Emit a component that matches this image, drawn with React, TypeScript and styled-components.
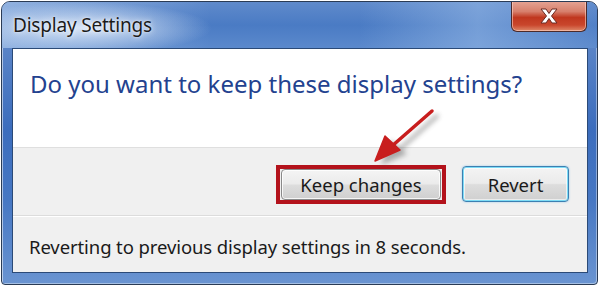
import React from "react";
import styled, { createGlobalStyle } from "styled-components";

const Global = createGlobalStyle`
  html, body { margin: 0; padding: 0; background: #ffffff; }
  body { width: 600px; height: 286px; overflow: hidden; }
  * { box-sizing: border-box; }
`;

const Window = styled.div`
  position: relative;
  margin: 1px 2px 0 1px;
  width: 597px;
  height: 284px;
  border: 1px solid #2a3b55;
  border-radius: 9px 9px 4px 4px;
  background: linear-gradient(180deg, #6a90cc 0%, #3c6dbd 45%, #4677c3 70%, #6a94d1 100%);
  display: flex;
  flex-direction: column;
  overflow: hidden;
  box-shadow: inset 1px 1px 0 rgba(255, 255, 255, 0.55), inset -1px -1px 0 rgba(255, 255, 255, 0.4);
`;

const TitleBar = styled.div`
  height: 46px;
  display: flex;
  align-items: flex-start;
  justify-content: space-between;
  padding: 0 9px 0 11px;
  background:
    radial-gradient(ellipse 130px 26px at 80px 26px, rgba(220, 232, 248, 0.95), rgba(220, 232, 248, 0) 100%),
    linear-gradient(90deg, rgba(180, 205, 238, 0.6) 0%, rgba(60, 110, 190, 0) 35%, rgba(60, 110, 190, 0) 60%, rgba(150, 185, 230, 0.55) 80%, rgba(110, 150, 210, 0.2) 100%),
    linear-gradient(180deg, #5f8acb 0%, #4a7bc4 50%, #5b89cc 100%);
`;

const Title = styled.div`
  margin-top: 10px;
  line-height: 26px;
  font-family: "Noto Sans", "Open Sans", sans-serif;
  font-size: 19px;
  letter-spacing: -0.2px;
  color: #1b1b1b;
  text-shadow: 0 0 6px rgba(255, 255, 255, 0.9), 0 0 2px rgba(255, 255, 255, 0.8);
`;

const CloseButton = styled.div`
  width: 76px;
  height: 31px;
  margin-top: -1px;
  margin-right: 1px;
  border: 1px solid #4b2a2a;
  border-top: none;
  border-radius: 0 0 6px 6px;
  background: linear-gradient(180deg, #e6a595 0%, #d7806c 35%, #c0381f 55%, #c9462c 80%, #de8a6a 100%);
  box-shadow: inset 0 0 0 1px rgba(255, 220, 210, 0.55);
  display: flex;
  align-items: center;
  justify-content: center;
`;

const Client = styled.div`
  margin: 0 9px 0 10px;
  flex: 1;
  border: 1px solid #2b4a77;
  background: #f0f0f0;
  display: flex;
  flex-direction: column;
`;

const MainArea = styled.div`
  height: 99px;
  background: #ffffff;
  border-bottom: 1px solid #dfdfdf;
  padding: 19px 0 0 17px;
`;

const Heading = styled.div`
  font-family: "Noto Sans", "Open Sans", sans-serif;
  font-size: 24px;
  line-height: 32px;
  letter-spacing: 0px;
  color: #23428f;
`;

const ButtonRow = styled.div`
  height: 68px;
  border-bottom: 1px solid #dcdcdc;
  box-shadow: 0 1px 0 #ffffff;
  display: flex;
  justify-content: flex-end;
  align-items: center;
  gap: 16px;
  padding: 5px 18px 0 0;
`;

const Highlight = styled.div`
  border: 4px solid #b3121b;
  padding: 0 1px;
`;

const Button = styled.div<{ $default?: boolean; $width: number; $height: number }>`
  width: ${(p) => p.$width}px;
  height: ${(p) => p.$height}px;
  border-radius: 4px;
  border: 1px solid ${(p) => (p.$default ? "#3c7fb1" : "#8a8a8a")};
  background: linear-gradient(180deg, #f4f4f4 0%, #ebebeb 48%, #dddddd 52%, #cfcfcf 100%);
  box-shadow: ${(p) =>
    p.$default
      ? "inset 0 0 0 1px #7ddcf6, inset 0 0 0 2px rgba(255,255,255,0.6), 0 0 2px rgba(80,170,230,0.6)"
      : "inset 0 0 0 1px rgba(255,255,255,0.8)"};
  display: flex;
  align-items: center;
  justify-content: center;
  font-family: "Noto Sans", "Open Sans", sans-serif;
  font-size: 18.5px;
  color: #1a1a1a;
`;

const Status = styled.div`
  flex: 1;
  padding: 19px 0 0 16px;
  font-family: "Noto Sans", "Open Sans", sans-serif;
  font-size: 18.5px;
  line-height: 24px;
  letter-spacing: -0.1px;
  color: #1a1a1a;
`;

const BottomFrame = styled.div`
  height: 11px;
`;

const ArrowLayer = styled.svg`
  position: absolute;
  left: 340px;
  top: 100px;
  overflow: visible;
  pointer-events: none;
`;

export default function App() {
  return (
    <>
      <Global />
      <Window>
        <TitleBar>
          <Title>Display Settings</Title>
          <CloseButton>
            <svg width="22" height="18" viewBox="0 0 22 18">
              <path
                d="M3 2 L8 2 L11 6.5 L14 2 L19 2 L13.5 9 L19 16 L14 16 L11 11.5 L8 16 L3 16 L8.5 9 Z"
                fill="#ffffff"
                stroke="#6a2a22"
                strokeWidth="1"
                strokeLinejoin="round"
              />
            </svg>
          </CloseButton>
        </TitleBar>
        <Client>
          <MainArea>
            <Heading>Do you want to keep these display settings?</Heading>
          </MainArea>
          <ButtonRow>
            <Highlight>
              <Button $width={160} $height={31}>Keep changes</Button>
            </Highlight>
            <Button $default $width={107} $height={36}>Revert</Button>
          </ButtonRow>
          <Status>Reverting to previous display settings in 8 seconds.</Status>
        </Client>
        <BottomFrame />
        <ArrowLayer width="110" height="70">
          <defs>
            <filter id="sh" x="-50%" y="-50%" width="200%" height="200%">
              <feGaussianBlur stdDeviation="2.5" />
            </filter>
          </defs>
          <g transform="translate(5,5)" opacity="0.45" filter="url(#sh)">
            <path d="M90 9 L52 43" stroke="#555" strokeWidth="4" strokeLinecap="round" />
            <path d="M34 58 L44 33 L60 47 Z" fill="#555" />
          </g>
          <path d="M90 9 L50 44" stroke="#c81e1e" strokeWidth="3.5" strokeLinecap="round" />
          <path d="M33 59 L43 34 L58 48 Z" fill="#c81e1e" stroke="#c81e1e" strokeWidth="1.5" strokeLinejoin="round" />
        </ArrowLayer>
      </Window>
    </>
  );
}
